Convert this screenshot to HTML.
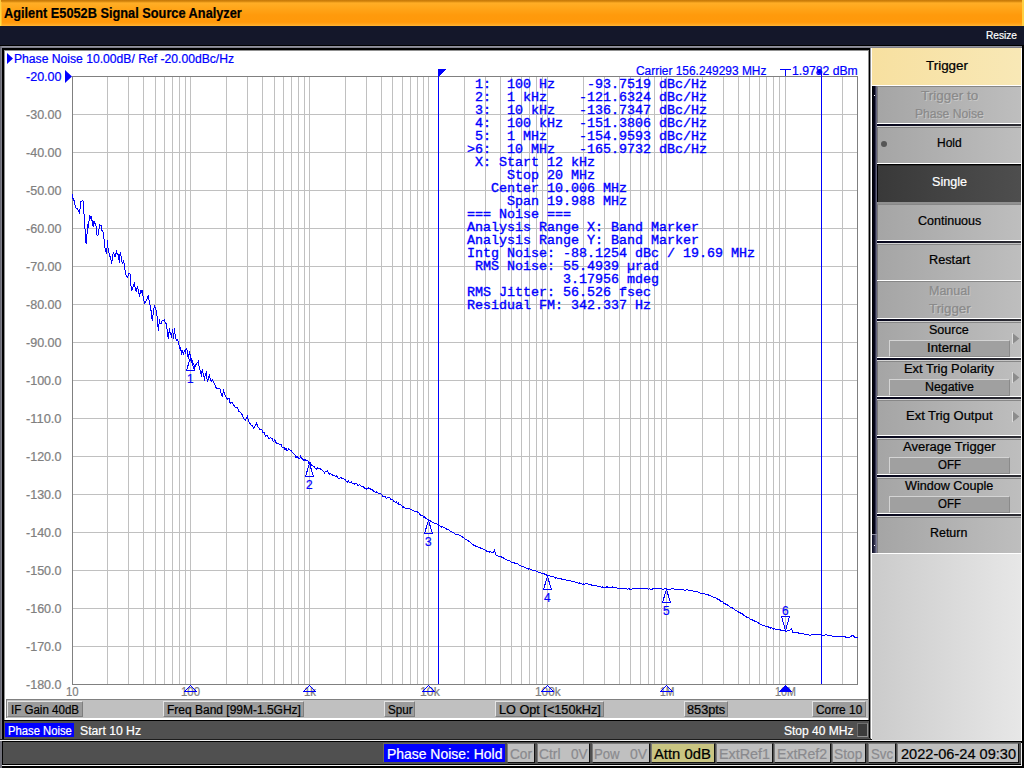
<!DOCTYPE html>
<html><head><meta charset="utf-8"><title>Agilent E5052B Signal Source Analyzer</title>
<style>
html,body{margin:0;padding:0}
body{width:1024px;height:768px;position:relative;overflow:hidden;background:#14172a;font-family:"Liberation Sans",sans-serif}
div{position:absolute;box-sizing:border-box}
.t{position:absolute;white-space:pre;transform-origin:0 0;display:block;-webkit-text-stroke:0.22px currentColor}
.m{font-family:"Liberation Mono",monospace;-webkit-text-stroke:0.38px #0000ff}
.b{font-weight:bold}
svg{position:absolute;left:0;top:0}
</style></head><body>

<div style="left:0;top:0;width:1024px;height:26px;background:linear-gradient(to bottom,#c27608 0,#d98a10 1.5px,#ffae26 3px,#ffa61a 8px,#ff9a0c 15px,#ff990a 22px,#ffa21a 24px,#ffb634 26px)"></div>
<div style="left:0;top:0;width:1px;height:26px;background:linear-gradient(to bottom,#ffc83a,#ffe048)"></div><div style="left:1px;top:2px;width:1px;height:24px;background:linear-gradient(to bottom,#ffb42c,#ffc030)"></div>
<div style="left:1022px;top:0;width:2px;height:26px;background:#ffcf40"></div>
<span class="t b" style="left:4.20px;top:4px;font-size:14px;line-height:18px;color:#000;transform:scaleX(0.9115);">Agilent E5052B Signal Source Analyzer</span>
<span class="t" style="left:986.40px;top:28px;font-size:11px;line-height:14px;color:#fff;transform:scaleX(0.9225);">Resize</span>
<div style="left:0;top:45px;width:1024px;height:1px;background:#000"></div>
<div style="left:0;top:46px;width:1024px;height:2px;background:linear-gradient(to bottom,#9c9ca8,#74747e)"></div>
<div style="left:0;top:46px;width:2px;height:722px;background:linear-gradient(to right,#5c5c68,#8c8c96)"></div>
<div style="left:2px;top:48px;width:868px;height:693px;background:#000"></div>
<div style="left:4px;top:50px;width:865px;height:670px;background:#909090"></div>
<div style="left:5px;top:51px;width:863px;height:669px;background:#fff"></div>
<div style="left:870px;top:48px;width:1px;height:693px;background:#909090"></div>
<div style="left:871px;top:48px;width:1px;height:693px;background:#fff"></div>
<svg width="1024" height="768" viewBox="0 0 1024 768" shape-rendering="crispEdges">
<path d="M107.5 76V684M128.5 76V684M143.5 76V684M155.5 76V684M164.5 76V684M172.5 76V684M179.5 76V684M185.5 76V684M190.5 76V684M226.5 76V684M247.5 76V684M262.5 76V684M274.5 76V684M283.5 76V684M291.5 76V684M298.5 76V684M304.5 76V684M309.5 76V684M345.5 76V684M366.5 76V684M381.5 76V684M392.5 76V684M402.5 76V684M410.5 76V684M417.5 76V684M423.5 76V684M428.5 76V684M464.5 76V684M485.5 76V684M500.5 76V684M511.5 76V684M521.5 76V684M529.5 76V684M536.5 76V684M542.5 76V684M547.5 76V684M583.5 76V684M604.5 76V684M619.5 76V684M630.5 76V684M640.5 76V684M648.5 76V684M654.5 76V684M661.5 76V684M666.5 76V684M702.5 76V684M723.5 76V684M738.5 76V684M749.5 76V684M759.5 76V684M766.5 76V684M773.5 76V684M779.5 76V684M785.5 76V684M821.5 76V684M842.5 76V684M72 114.5H857M72 152.5H857M72 190.5H857M72 228.5H857M72 266.5H857M72 304.5H857M72 342.5H857M72 380.5H857M72 418.5H857M72 456.5H857M72 494.5H857M72 532.5H857M72 570.5H857M72 608.5H857M72 646.5H857" stroke="#c0c0c0" stroke-width="1" fill="none"/>
<rect x="72.5" y="76.5" width="785" height="608" stroke="#808080" fill="none"/>
</svg>
<svg width="1024" height="768" viewBox="0 0 1024 768">
<polyline fill="none" stroke="#0000ff" stroke-width="1" shape-rendering="crispEdges" points="72.0,194.2 73.0,198.4 74.0,200.5 75.3,205.9 75.8,208.0 77.4,208.8 78.7,210.9 79.5,212.6 80.3,207.6 80.8,201.3 81.6,201.8 82.6,200.5 83.5,202.2 83.7,213.4 84.5,214.7 84.7,228.0 85.5,229.7 85.8,242.6 86.6,243.4 86.8,234.7 87.4,233.4 87.7,225.9 88.4,227.2 88.7,221.3 89.5,220.1 89.7,215.5 90.5,217.6 90.8,216.8 91.6,216.3 91.8,220.1 92.7,222.2 92.8,225.5 93.7,226.3 93.9,221.8 94.7,221.3 94.9,223.8 95.8,223.8 96.2,228.8 96.6,234.7 97.4,235.5 98.2,234.7 98.7,229.2 99.5,228.8 99.7,224.7 100.8,225.5 101.6,225.5 101.8,230.1 102.7,230.5 103.5,235.5 103.7,238.4 103.8,238.9 104.6,239.3 104.8,247.7 105.7,248.5 106.0,252.2 106.8,253.1 107.3,240.2 107.9,246.0 108.3,251.8 109.3,253.5 110.4,258.1 111.2,260.2 111.5,263.5 112.1,260.2 112.5,256.0 113.5,252.2 114.3,255.6 115.0,257.2 115.7,255.2 116.4,251.4 117.2,253.5 118.2,254.8 118.8,258.1 119.3,262.7 119.8,255.2 120.6,252.2 121.0,256.0 121.7,261.0 122.7,263.1 123.6,261.4 124.4,264.3 124.8,269.3 125.7,271.0 126.0,274.8 127.5,277.2 128.3,274.8 129.2,273.1 130.4,274.3 130.7,285.2 131.5,286.8 131.7,291.4 132.7,287.7 133.5,286.0 134.3,283.5 135.0,286.8 136.0,291.0 136.4,291.0 137.2,286.8 138.3,289.8 138.9,292.7 139.5,297.2 140.2,293.1 141.0,290.6 141.7,292.2 142.5,290.2 142.8,295.2 143.7,298.1 144.3,303.5 145.3,302.2 146.4,300.6 147.2,298.5 148.3,295.2 148.7,299.8 149.5,300.6 149.8,304.8 150.6,306.0 150.8,310.2 151.7,311.8 151.8,318.1 152.5,321.4 152.8,315.2 153.5,314.3 153.7,309.3 154.5,305.3 155.3,308.1 156.0,310.2 156.7,315.6 157.5,316.4 157.8,324.8 158.5,330.6 158.9,325.2 159.5,319.3 160.0,323.9 161.0,323.9 161.8,321.0 162.7,320.6 163.7,321.0 164.5,320.2 165.2,322.2 165.8,323.1 166.7,324.8 167.0,329.3 167.7,331.0 167.9,336.0 168.7,339.3 168.9,333.5 169.5,328.5 170.2,333.1 171.4,336.0 172.0,332.7 172.5,329.3 173.1,333.9 173.5,338.5 174.1,333.5 174.5,328.5 175.0,333.9 175.6,334.8 176.0,339.3 176.4,340.2 177.5,339.3 178.3,341.8 179.2,345.6 179.8,349.3 180.6,346.8 181.4,353.9 182.5,351.4 183.3,353.9 184.3,351.0 185.3,352.7 186.4,347.7 187.2,351.0 187.7,356.4 188.5,358.5 189.2,351.8 189.8,351.4 190.2,357.2 190.6,361.0 191.2,358.9 192.2,360.2 193.1,363.5 193.9,364.3 194.8,367.7 195.6,365.2 196.8,363.5 198.3,361.4 198.9,366.0 199.8,369.3 200.6,371.4 201.4,376.8 202.2,368.9 202.8,372.7 203.9,376.0 204.5,380.6 205.2,374.8 206.2,372.7 206.7,376.8 207.5,381.4 208.5,377.7 209.5,375.6 210.2,379.3 211.4,381.0 212.5,379.8 213.5,382.2 214.8,384.8 216.0,387.7 217.2,388.5 219.8,388.5 220.6,391.4 221.4,394.3 222.2,396.0 223.7,390.6 224.8,394.3 226.0,397.2 227.7,399.3 229.3,398.5 229.8,402.1 230.7,403.1 231.7,402.5 232.6,403.2 233.5,405.1 234.4,405.7 235.3,407.6 236.3,407.5 237.2,407.6 238.1,409.1 239.0,411.4 239.9,412.1 240.9,413.0 241.8,414.1 242.7,415.5 243.6,418.7 244.5,419.6 245.5,420.2 246.4,417.6 247.3,416.3 248.2,419.6 249.1,422.3 250.1,423.5 251.0,424.9 251.9,425.2 252.8,426.4 253.7,428.1 254.7,427.0 255.6,424.8 256.5,423.2 257.4,425.6 258.3,427.2 259.3,428.4 260.2,429.7 261.1,429.8 262.0,429.9 262.9,432.6 263.9,432.2 264.8,434.5 265.7,435.9 266.6,435.1 267.5,436.0 268.5,438.4 269.4,438.4 270.3,437.5 271.2,438.0 272.1,438.6 273.1,441.3 274.0,441.4 274.9,439.7 275.8,442.2 276.7,443.1 277.7,443.0 278.6,443.0 279.5,444.5 280.4,444.0 281.3,444.3 282.3,447.9 283.2,447.6 284.1,447.7 285.0,449.4 285.9,448.4 286.9,450.2 287.8,450.5 288.7,449.1 289.6,449.7 290.5,450.3 291.5,450.7 292.4,452.9 293.3,453.0 294.2,454.7 295.1,454.9 296.1,457.8 297.0,456.6 297.9,457.4 298.8,458.2 299.7,458.6 300.7,456.2 301.6,458.5 302.5,459.0 303.4,460.2 304.3,460.5 305.3,459.3 306.2,461.0 307.1,460.7 308.0,460.7 308.9,463.6 309.9,462.4 310.8,464.1 311.7,465.7 312.6,466.0 313.5,466.0 314.5,467.3 315.4,468.1 316.3,469.4 317.2,467.6 318.1,469.0 319.1,468.0 320.0,468.1 320.9,469.9 321.8,469.8 322.7,470.6 323.7,471.9 324.6,473.0 325.5,471.3 326.4,471.5 327.3,470.8 328.3,472.1 329.2,474.1 330.1,473.8 331.0,474.1 331.9,474.2 332.9,475.2 333.8,475.0 334.7,475.7 335.6,476.6 336.5,476.0 337.5,477.2 338.4,478.5 339.3,478.5 340.2,477.5 341.1,477.7 342.1,478.5 343.0,478.3 343.9,479.1 344.8,479.2 345.7,480.7 346.7,481.4 347.6,482.1 348.5,481.2 349.4,482.7 350.3,482.9 351.3,482.1 352.2,483.6 353.1,483.9 354.0,482.7 354.9,484.2 355.9,483.4 356.8,484.0 357.7,485.4 358.6,485.5 359.5,484.8 360.5,485.7 361.4,486.3 362.3,486.5 363.2,486.7 364.1,487.5 365.1,488.8 366.0,488.2 366.9,489.2 367.8,488.8 368.7,487.7 369.7,488.2 370.6,489.2 371.5,489.4 372.4,489.1 373.3,491.2 374.3,491.5 375.2,492.5 376.1,491.7 377.0,492.6 377.9,492.6 378.9,494.1 379.8,493.4 380.7,493.4 381.6,494.4 382.5,496.0 383.5,496.5 384.4,496.2 385.3,496.5 386.2,498.2 387.1,497.8 388.1,498.2 389.0,497.4 389.9,497.8 390.8,499.4 391.7,499.4 392.7,499.3 393.6,501.5 394.5,501.6 395.4,502.6 396.3,502.0 397.3,503.9 398.2,503.0 399.1,504.9 400.0,504.6 400.9,505.0 401.9,506.0 402.8,507.4 403.7,506.9 404.6,507.3 405.5,508.3 406.5,508.1 407.4,508.1 408.3,508.5 409.2,508.6 410.1,509.2 411.1,509.7 412.0,510.0 412.9,511.1 413.8,510.6 414.7,511.3 415.7,511.0 416.6,511.8 417.5,511.9 418.4,512.9 419.3,513.2 420.3,515.2 421.2,515.3 422.1,515.1 423.0,516.1 423.9,517.4 424.9,516.6 425.8,518.5 426.7,518.5 427.6,519.3 428.5,520.5 429.5,520.2 430.4,520.8 431.3,521.5 432.2,522.2 433.1,522.1 434.1,523.0 435.0,523.3 435.9,523.7 436.8,524.0 437.7,524.4 438.7,524.9 439.6,525.7 440.5,526.2 441.4,527.1 442.3,526.9 443.3,527.1 444.2,527.4 445.1,528.3 446.0,528.7 446.9,529.2 447.9,529.4 448.8,530.0 449.7,530.7 450.6,531.4 451.5,531.8 452.5,532.4 453.4,532.6 454.3,533.6 455.2,534.0 456.1,534.0 457.1,534.0 458.0,535.0 458.9,534.8 459.8,535.3 460.7,535.6 461.7,536.5 462.6,537.2 463.5,537.8 464.4,538.2 465.3,539.1 466.3,539.3 467.2,540.2 468.1,540.7 469.0,541.7 469.9,542.1 470.9,542.7 471.8,543.7 472.7,544.3 473.6,545.1 474.5,545.4 475.5,546.0 476.4,546.3 477.3,546.7 478.2,547.2 479.1,547.1 480.1,547.4 481.0,548.3 481.9,548.0 482.8,549.0 483.7,549.4 484.7,549.3 485.6,550.5 486.5,551.0 487.4,551.2 488.3,551.7 489.3,552.1 490.2,551.6 491.1,552.1 492.0,552.2 493.1,552.6 494.4,549.9 495.7,554.7 497.5,555.6 498.5,556.1 499.4,556.0 500.3,556.2 501.2,556.7 502.1,557.3 503.1,557.5 504.0,558.6 504.9,558.9 505.8,559.4 506.7,559.8 507.7,560.3 508.6,560.6 509.5,560.7 510.4,561.8 511.3,562.1 512.3,562.3 513.2,562.6 514.1,563.1 515.0,562.9 515.9,563.9 516.9,563.8 517.8,564.0 518.7,564.6 519.6,565.4 520.5,565.3 521.5,566.2 522.4,566.8 523.3,566.8 524.2,567.1 525.1,567.6 526.1,568.2 527.0,568.6 527.9,568.8 528.8,569.1 529.7,568.9 530.7,569.3 531.6,569.7 532.5,570.5 533.4,570.4 534.3,570.9 535.3,570.7 536.2,571.1 537.1,571.6 538.0,572.2 538.9,572.5 539.9,572.8 540.8,572.8 541.7,573.2 542.6,573.5 543.5,573.8 544.5,573.8 545.4,574.9 546.3,574.6 547.2,575.6 548.1,575.8 549.1,575.3 550.0,575.9 550.9,576.5 551.8,576.9 552.7,576.7 553.7,576.8 554.6,577.1 555.5,578.0 556.4,577.6 557.3,578.2 558.3,578.0 559.2,578.5 560.1,579.1 561.0,578.6 561.9,579.3 562.9,579.3 563.8,579.8 564.7,579.8 565.6,579.6 566.5,580.3 567.5,580.2 568.4,580.0 569.3,580.2 570.2,580.9 571.1,581.0 572.1,581.1 573.0,581.2 573.9,581.6 574.8,581.8 575.7,582.4 576.7,582.0 577.6,582.8 578.5,583.1 579.4,582.8 580.3,583.7 581.3,583.7 582.2,584.1 583.1,583.9 584.0,584.2 584.9,584.1 586.5,583.2 587.7,583.9 588.6,584.3 589.5,584.5 590.5,584.6 591.4,584.8 592.3,585.6 593.2,585.3 594.1,586.0 595.1,585.6 596.0,585.7 596.9,586.1 597.8,586.0 598.7,586.3 599.7,586.9 600.6,587.0 601.5,587.1 602.4,587.0 603.3,587.3 604.3,587.3 605.2,587.1 606.1,587.3 607.0,586.8 607.9,587.3 608.9,587.2 609.8,587.4 610.7,587.4 611.6,587.1 612.5,587.0 613.5,587.7 614.4,587.1 615.3,587.5 616.2,587.7 617.1,588.2 618.1,588.6 619.0,588.9 619.9,588.4 620.8,588.8 621.7,588.5 622.7,588.8 623.6,588.7 624.5,588.6 625.4,588.6 626.3,588.7 627.3,589.3 628.2,589.0 629.1,588.8 630.0,589.4 630.9,589.4 631.9,589.0 632.8,588.7 633.7,588.7 634.6,588.5 635.5,588.7 636.5,588.4 637.4,588.5 638.3,588.5 639.2,588.7 640.1,588.9 641.1,588.9 642.0,588.7 642.9,588.7 643.8,588.8 644.7,588.8 645.7,588.8 646.6,588.6 647.5,588.8 648.4,589.4 649.3,588.8 650.3,589.1 651.2,589.1 652.1,589.2 653.0,588.7 653.9,588.7 654.9,588.6 655.8,588.7 656.7,588.7 657.6,589.0 658.5,588.9 659.5,588.9 660.4,588.3 661.3,588.4 662.2,589.0 663.1,589.2 664.1,588.9 665.0,589.1 665.9,588.7 666.8,589.0 667.7,589.5 668.7,589.4 669.6,589.4 670.5,589.5 671.4,589.0 672.3,588.9 673.3,588.9 674.2,589.2 675.1,589.4 676.0,589.6 676.9,589.5 677.9,589.4 678.8,589.5 679.7,589.4 680.6,589.5 681.5,589.2 682.5,589.9 683.4,589.6 684.3,590.2 685.2,590.1 686.1,589.9 687.1,589.8 688.0,590.0 688.9,590.4 689.8,590.6 690.7,590.2 691.7,590.4 692.6,591.0 693.5,591.2 694.4,591.3 695.3,591.4 696.3,591.9 697.2,591.7 698.1,592.1 699.0,592.5 699.9,593.1 700.9,593.1 701.8,593.6 702.7,593.5 703.6,593.5 704.5,593.8 705.5,594.6 706.4,594.7 707.3,594.7 708.2,594.7 709.1,595.4 710.1,595.9 711.0,596.0 711.9,596.2 712.8,596.8 713.7,597.4 714.7,597.3 715.6,597.6 716.5,598.4 717.4,599.0 718.3,599.7 719.3,599.9 720.2,600.9 721.1,601.4 722.0,601.7 722.9,602.0 723.9,603.2 724.8,603.3 725.7,604.2 726.6,604.3 727.5,604.9 728.5,605.9 729.4,606.1 730.3,607.2 731.2,607.4 732.1,607.8 733.1,608.4 734.0,609.1 734.9,609.9 735.8,610.7 736.7,610.6 737.7,611.4 738.6,611.8 739.5,613.0 740.4,612.9 741.3,613.4 742.3,613.9 743.2,614.7 744.1,615.7 745.0,616.2 745.9,616.6 746.9,617.3 747.8,617.8 748.7,617.9 749.6,618.3 750.5,619.4 751.5,619.8 752.4,619.7 753.3,620.7 754.2,620.9 755.1,621.4 756.1,621.8 757.0,622.1 757.9,622.5 758.8,623.1 759.7,623.7 760.7,624.6 761.6,624.4 762.5,625.4 763.4,625.1 764.3,625.5 765.3,626.2 766.2,626.5 767.1,626.6 768.0,626.6 768.9,627.2 769.9,627.5 770.8,628.2 771.7,627.9 772.6,628.4 773.5,629.1 774.5,628.7 775.4,629.3 776.3,629.9 777.2,629.9 778.1,629.5 779.1,629.6 780.0,629.7 780.9,630.5 781.8,630.1 782.7,630.6 783.7,630.8 784.6,630.5 785.5,630.6 786.4,631.1 787.3,630.8 788.3,630.5 789.7,630.6 791.4,628.6 792.9,632.2 794.7,632.5 795.6,632.9 796.5,632.3 797.5,632.7 798.4,633.0 799.3,633.6 800.2,633.8 801.1,633.5 802.1,633.5 803.0,633.8 803.9,634.0 804.8,634.5 805.7,634.0 806.7,634.7 807.6,634.8 808.5,635.0 809.4,635.1 810.3,635.1 811.3,634.8 812.2,634.8 813.1,634.8 814.0,635.0 814.9,634.4 815.9,634.5 816.8,634.9 817.7,634.4 818.6,634.2 819.5,634.2 820.5,634.6 821.4,634.5 822.3,635.1 823.2,635.2 824.1,635.4 825.1,634.9 826.0,634.9 826.9,635.0 827.8,635.4 828.7,635.7 829.7,635.6 830.6,635.5 831.5,635.8 832.4,636.0 833.3,636.2 834.3,636.3 835.2,636.5 836.1,636.5 837.0,636.1 837.9,636.8 838.9,636.4 839.8,636.8 840.7,636.7 841.6,637.0 842.5,636.7 843.5,636.8 844.4,636.9 845.3,636.9 846.2,637.5 847.1,637.4 848.1,637.2 849.0,637.1 849.9,637.2 850.8,636.4 851.7,635.9 853.2,635.2 854.6,637.6 856.3,637.0 857.3,637.2 857.4,636.9"/>
<g shape-rendering="crispEdges" stroke="#0000ff" fill="none">
<path d="M438.5 69V684M821.5 72V684"/>
<path d="M438 69H446L438 77Z" fill="#0000ff" stroke="none"/>
<path d="M780 69.5H791M785.5 69V76"/>
</g>
<circle cx="819.6" cy="71.4" r="2.5" fill="#0000ff"/>
<path d="M65 70L72 76.5L65 83Z" fill="#0000ff"/>
<path d="M7 53L13 58.5L7 64Z" fill="#0000ff"/>
<g shape-rendering="crispEdges" fill="none" stroke="#0000ff" stroke-width="1">
<path d="M190.5 357.5L186.5 370.5H194.5Z"/>
<path d="M309.5 463.5L305.5 476.5H313.5Z"/>
<path d="M428.5 520.5L424.5 533.5H432.5Z"/>
<path d="M547.5 576.5L543.5 589.5H551.5Z"/>
<path d="M666.5 589.5L662.5 602.5H670.5Z"/>
<path d="M785.5 630.5L781.5 616.5H789.5Z"/>
</g>
</svg>
<span class="t" style="left:14.00px;top:51px;font-size:12px;line-height:16px;color:#0000ff;transform:scaleX(1.0118);">Phase Noise 10.00dB/ Ref -20.00dBc/Hz</span>
<span class="t" style="left:635.60px;top:63px;font-size:12px;line-height:16px;color:#0000ff;transform:scaleX(0.9924);">Carrier 156.249293 MHz</span>
<span class="t" style="left:792.00px;top:63px;font-size:12px;line-height:16px;color:#0000ff;transform:scaleX(1.0164);">1.9782 dBm</span>
<span class="t" style="left:26.00px;top:69px;font-size:12px;line-height:16px;color:#0000ff;transform:scaleX(1.0435);">-20.00</span>
<span class="t" style="left:26.00px;top:107px;font-size:12px;line-height:16px;color:#808080;transform:scaleX(1.0435);">-30.00</span>
<span class="t" style="left:26.00px;top:145px;font-size:12px;line-height:16px;color:#808080;transform:scaleX(1.0435);">-40.00</span>
<span class="t" style="left:26.00px;top:183px;font-size:12px;line-height:16px;color:#808080;transform:scaleX(1.0435);">-50.00</span>
<span class="t" style="left:26.00px;top:221px;font-size:12px;line-height:16px;color:#808080;transform:scaleX(1.0435);">-60.00</span>
<span class="t" style="left:26.00px;top:259px;font-size:12px;line-height:16px;color:#808080;transform:scaleX(1.0435);">-70.00</span>
<span class="t" style="left:26.00px;top:297px;font-size:12px;line-height:16px;color:#808080;transform:scaleX(1.0435);">-80.00</span>
<span class="t" style="left:26.00px;top:335px;font-size:12px;line-height:16px;color:#808080;transform:scaleX(1.0435);">-90.00</span>
<span class="t" style="left:26.00px;top:373px;font-size:12px;line-height:16px;color:#808080;transform:scaleX(1.0435);">-100.0</span>
<span class="t" style="left:26.00px;top:411px;font-size:12px;line-height:16px;color:#808080;transform:scaleX(1.0719);">-110.0</span>
<span class="t" style="left:26.00px;top:449px;font-size:12px;line-height:16px;color:#808080;transform:scaleX(1.0435);">-120.0</span>
<span class="t" style="left:26.00px;top:487px;font-size:12px;line-height:16px;color:#808080;transform:scaleX(1.0435);">-130.0</span>
<span class="t" style="left:26.00px;top:525px;font-size:12px;line-height:16px;color:#808080;transform:scaleX(1.0435);">-140.0</span>
<span class="t" style="left:26.00px;top:563px;font-size:12px;line-height:16px;color:#808080;transform:scaleX(1.0435);">-150.0</span>
<span class="t" style="left:26.00px;top:601px;font-size:12px;line-height:16px;color:#808080;transform:scaleX(1.0435);">-160.0</span>
<span class="t" style="left:26.00px;top:639px;font-size:12px;line-height:16px;color:#808080;transform:scaleX(1.0435);">-170.0</span>
<span class="t" style="left:26.00px;top:677px;font-size:12px;line-height:16px;color:#808080;transform:scaleX(1.0435);">-180.0</span>
<span class="t" style="left:187.20px;top:371px;font-size:12px;line-height:16px;color:#0000ff;transform:scaleX(0.9910);">1</span>
<span class="t" style="left:306.20px;top:477px;font-size:12px;line-height:16px;color:#0000ff;transform:scaleX(0.9910);">2</span>
<span class="t" style="left:425.20px;top:534px;font-size:12px;line-height:16px;color:#0000ff;transform:scaleX(0.9910);">3</span>
<span class="t" style="left:544.20px;top:590px;font-size:12px;line-height:16px;color:#0000ff;transform:scaleX(0.9910);">4</span>
<span class="t" style="left:663.20px;top:603px;font-size:12px;line-height:16px;color:#0000ff;transform:scaleX(0.9910);">5</span>
<span class="t" style="left:782.20px;top:603px;font-size:12px;line-height:16px;color:#0000ff;transform:scaleX(0.9910);">6</span>
<span class="t" style="left:65.80px;top:684px;font-size:12px;line-height:16px;color:#808080;transform:scaleX(0.9459);">10</span>
<span class="t" style="left:181.10px;top:684px;font-size:12px;line-height:16px;color:#808080;transform:scaleX(0.9481);">100</span>
<span class="t" style="left:303.75px;top:684px;font-size:12px;line-height:16px;color:#808080;transform:scaleX(0.9513);">1k</span>
<span class="t" style="left:419.70px;top:684px;font-size:12px;line-height:16px;color:#808080;transform:scaleX(1.0217);">10k</span>
<span class="t" style="left:535.00px;top:684px;font-size:12px;line-height:16px;color:#808080;transform:scaleX(0.9885);">100k</span>
<span class="t" style="left:660.30px;top:684px;font-size:12px;line-height:16px;color:#808080;transform:scaleX(0.8753);">1M</span>
<span class="t" style="left:775.00px;top:684px;font-size:12px;line-height:16px;color:#808080;transform:scaleX(0.8912);">10M</span>
<svg width="1024" height="768" shape-rendering="crispEdges"><path d="M190.5 685.5L184.5 691.5H196.5Z" fill="none" stroke="#0000ff" stroke-width="1"/><path d="M309.5 685.5L303.5 691.5H315.5Z" fill="none" stroke="#0000ff" stroke-width="1"/><path d="M428.5 685.5L422.5 691.5H434.5Z" fill="none" stroke="#0000ff" stroke-width="1"/><path d="M547.5 685.5L541.5 691.5H553.5Z" fill="none" stroke="#0000ff" stroke-width="1"/><path d="M666.5 685.5L660.5 691.5H672.5Z" fill="none" stroke="#0000ff" stroke-width="1"/><path d="M785.5 685L779 691.5V692H792V691.5Z" fill="#0000ff"/></svg>
<span class="t m" style="left:467.00px;top:76px;font-size:13.333px;line-height:17px;color:#0000ff;transform:scaleX(1.0000);"> 1:  100 Hz    -93.7519 dBc/Hz</span>
<span class="t m" style="left:467.00px;top:89px;font-size:13.333px;line-height:17px;color:#0000ff;transform:scaleX(1.0000);"> 2:  1 kHz    -121.6324 dBc/Hz</span>
<span class="t m" style="left:467.00px;top:102px;font-size:13.333px;line-height:17px;color:#0000ff;transform:scaleX(1.0000);"> 3:  10 kHz   -136.7347 dBc/Hz</span>
<span class="t m" style="left:467.00px;top:115px;font-size:13.333px;line-height:17px;color:#0000ff;transform:scaleX(1.0000);"> 4:  100 kHz  -151.3806 dBc/Hz</span>
<span class="t m" style="left:467.00px;top:128px;font-size:13.333px;line-height:17px;color:#0000ff;transform:scaleX(1.0000);"> 5:  1 MHz    -154.9593 dBc/Hz</span>
<span class="t m" style="left:467.00px;top:141px;font-size:13.333px;line-height:17px;color:#0000ff;transform:scaleX(1.0000);">&gt;6:  10 MHz   -165.9732 dBc/Hz</span>
<span class="t m" style="left:467.00px;top:154px;font-size:13.333px;line-height:17px;color:#0000ff;transform:scaleX(1.0000);"> X: Start 12 kHz</span>
<span class="t m" style="left:467.00px;top:167px;font-size:13.333px;line-height:17px;color:#0000ff;transform:scaleX(1.0000);">     Stop 20 MHz</span>
<span class="t m" style="left:467.00px;top:180px;font-size:13.333px;line-height:17px;color:#0000ff;transform:scaleX(1.0000);">   Center 10.006 MHz</span>
<span class="t m" style="left:467.00px;top:193px;font-size:13.333px;line-height:17px;color:#0000ff;transform:scaleX(1.0000);">     Span 19.988 MHz</span>
<span class="t m" style="left:467.00px;top:206px;font-size:13.333px;line-height:17px;color:#0000ff;transform:scaleX(1.0000);">=== Noise ===</span>
<span class="t m" style="left:467.00px;top:219px;font-size:13.333px;line-height:17px;color:#0000ff;transform:scaleX(1.0000);">Analysis Range X: Band Marker</span>
<span class="t m" style="left:467.00px;top:232px;font-size:13.333px;line-height:17px;color:#0000ff;transform:scaleX(1.0000);">Analysis Range Y: Band Marker</span>
<span class="t m" style="left:467.00px;top:245px;font-size:13.333px;line-height:17px;color:#0000ff;transform:scaleX(1.0000);">Intg Noise: -88.1254 dBc / 19.69 MHz</span>
<span class="t m" style="left:467.00px;top:258px;font-size:13.333px;line-height:17px;color:#0000ff;transform:scaleX(1.0000);"> RMS Noise: 55.4939 µrad</span>
<span class="t m" style="left:467.00px;top:271px;font-size:13.333px;line-height:17px;color:#0000ff;transform:scaleX(1.0000);">            3.17956 mdeg</span>
<span class="t m" style="left:467.00px;top:284px;font-size:13.333px;line-height:17px;color:#0000ff;transform:scaleX(1.0000);">RMS Jitter: 56.526 fsec</span>
<span class="t m" style="left:467.00px;top:297px;font-size:13.333px;line-height:17px;color:#0000ff;transform:scaleX(1.0000);">Residual FM: 342.337 Hz</span>
<div style="left:6px;top:699px;width:862px;height:19px;background:#c0c0c0;border-top:1px solid #808080;border-left:1px solid #808080"></div>
<div style="left:7px;top:701px;width:76px;height:16px;background:#9c9c9c;border-top:1px solid #e4e4e4;border-left:1px solid #e4e4e4;border-bottom:1px solid #7e7e7e;border-right:1px solid #7e7e7e"></div>
<span class="t" style="left:11.00px;top:702px;font-size:12px;line-height:16px;color:#000;transform:scaleX(0.9621);">IF Gain 40dB</span>
<div style="left:163px;top:701px;width:141px;height:16px;background:#9c9c9c;border-top:1px solid #e4e4e4;border-left:1px solid #e4e4e4;border-bottom:1px solid #7e7e7e;border-right:1px solid #7e7e7e"></div>
<span class="t" style="left:166.70px;top:702px;font-size:12px;line-height:16px;color:#000;transform:scaleX(0.9990);">Freq Band [99M-1.5GHz]</span>
<div style="left:384px;top:701px;width:31px;height:16px;background:#9c9c9c;border-top:1px solid #e4e4e4;border-left:1px solid #e4e4e4;border-bottom:1px solid #7e7e7e;border-right:1px solid #7e7e7e"></div>
<span class="t" style="left:387.75px;top:702px;font-size:12px;line-height:16px;color:#000;transform:scaleX(0.9676);">Spur</span>
<div style="left:495px;top:701px;width:109px;height:16px;background:#9c9c9c;border-top:1px solid #e4e4e4;border-left:1px solid #e4e4e4;border-bottom:1px solid #7e7e7e;border-right:1px solid #7e7e7e"></div>
<span class="t" style="left:499.00px;top:702px;font-size:12px;line-height:16px;color:#000;transform:scaleX(1.0559);">LO Opt [&lt;150kHz]</span>
<div style="left:684px;top:701px;width:44px;height:16px;background:#9c9c9c;border-top:1px solid #e4e4e4;border-left:1px solid #e4e4e4;border-bottom:1px solid #7e7e7e;border-right:1px solid #7e7e7e"></div>
<span class="t" style="left:687.00px;top:702px;font-size:12px;line-height:16px;color:#000;transform:scaleX(1.0607);">853pts</span>
<div style="left:812px;top:701px;width:54px;height:16px;background:#9c9c9c;border-top:1px solid #e4e4e4;border-left:1px solid #e4e4e4;border-bottom:1px solid #7e7e7e;border-right:1px solid #7e7e7e"></div>
<span class="t" style="left:815.50px;top:702px;font-size:12px;line-height:16px;color:#000;transform:scaleX(0.9908);">Corre 10</span>
<div style="left:4px;top:720px;width:865px;height:1px;background:#000"></div>
<div style="left:4px;top:721px;width:864.5px;height:17px;background:#505050"></div>
<div style="left:5px;top:723px;width:69px;height:14px;background:#0000ff"></div>
<span class="t" style="left:7.80px;top:723px;font-size:12px;line-height:16px;color:#fff;transform:scaleX(0.9377);">Phase Noise</span>
<span class="t" style="left:79.50px;top:723px;font-size:12px;line-height:16px;color:#fff;transform:scaleX(1.0167);">Start 10 Hz</span>
<span class="t" style="left:783.50px;top:723px;font-size:12px;line-height:16px;color:#fff;transform:scaleX(1.0020);">Stop 40 MHz</span>
<div style="left:857px;top:723px;width:11px;height:14px;background:#3c3c3c;border:1px solid #6e6e6e;border-right-color:#909090;border-bottom-color:#909090"></div>
<div style="left:4px;top:738px;width:867px;height:1px;background:#505050"></div>
<div style="left:0;top:739px;width:872px;height:1px;background:#1c1c1c"></div>
<div style="left:0;top:740px;width:1024px;height:1px;background:#f0f0f0"></div>
<div style="left:0;top:741px;width:1024px;height:27px;background:#000"></div>
<div style="left:3px;top:742px;width:1018px;height:22px;background:#505050"></div>
<div style="left:0;top:741px;width:1.5px;height:27px;background:#70707a"></div>
<div style="left:2px;top:765px;width:1020px;height:1px;background:#f0f0f0"></div>
<div style="left:1021px;top:743px;width:1px;height:23px;background:#f0f0f0"></div>
<div style="left:383px;top:743px;width:122px;height:19px;background:#0000ff;border-top:1px solid #6a6a5a;border-left:1px solid #6a6a5a"></div>
<span class="t" style="left:386.90px;top:745px;font-size:14.5px;line-height:18px;color:#fff;transform:scaleX(0.9608);">Phase Noise: Hold</span>
<div style="left:507px;top:743px;width:28px;height:20px;background:#c0c0c0;border-top:1px solid #7a7a7a;border-left:1px solid #7a7a7a;border-right:1px solid #101010;border-bottom:1px solid #101010"></div>
<span class="t" style="left:510.25px;top:745px;font-size:14.5px;line-height:18px;color:#8a8a8e;transform:scaleX(0.9402);">Cor</span>
<div style="left:536.5px;top:743px;width:53.5px;height:20px;background:#c0c0c0;border-top:1px solid #7a7a7a;border-left:1px solid #7a7a7a;border-right:1px solid #101010;border-bottom:1px solid #101010"></div>
<span class="t" style="left:539.00px;top:745px;font-size:14.5px;line-height:18px;color:#8a8a8e;transform:scaleX(0.9535);">Ctrl</span>
<span class="t" style="left:570.80px;top:745px;font-size:14.5px;line-height:18px;color:#8a8a8e;transform:scaleX(0.9346);">0V</span>
<div style="left:591.5px;top:743px;width:58.5px;height:20px;background:#c0c0c0;border-top:1px solid #7a7a7a;border-left:1px solid #7a7a7a;border-right:1px solid #101010;border-bottom:1px solid #101010"></div>
<span class="t" style="left:594.30px;top:745px;font-size:14.5px;line-height:18px;color:#8a8a8e;transform:scaleX(0.9089);">Pow</span>
<span class="t" style="left:630.00px;top:745px;font-size:14.5px;line-height:18px;color:#8a8a8e;transform:scaleX(0.9627);">0V</span>
<div style="left:650.75px;top:743px;width:63.75px;height:20px;background:#c9c582;border-top:1px solid #7a7a7a;border-left:1px solid #7a7a7a;border-right:1px solid #101010;border-bottom:1px solid #101010"></div>
<span class="t" style="left:654.00px;top:745px;font-size:14.5px;line-height:18px;color:#000;transform:scaleX(1.0205);">Attn 0dB</span>
<div style="left:716px;top:743px;width:57px;height:20px;background:#c0c0c0;border-top:1px solid #7a7a7a;border-left:1px solid #7a7a7a;border-right:1px solid #101010;border-bottom:1px solid #101010"></div>
<span class="t" style="left:718.50px;top:745px;font-size:14.5px;line-height:18px;color:#8a8a8e;transform:scaleX(0.9894);">ExtRef1</span>
<div style="left:773.5px;top:743px;width:57.0px;height:20px;background:#c0c0c0;border-top:1px solid #7a7a7a;border-left:1px solid #7a7a7a;border-right:1px solid #101010;border-bottom:1px solid #101010"></div>
<span class="t" style="left:776.75px;top:745px;font-size:14.5px;line-height:18px;color:#8a8a8e;transform:scaleX(0.9700);">ExtRef2</span>
<div style="left:831.75px;top:743px;width:34.25px;height:20px;background:#c0c0c0;border-top:1px solid #7a7a7a;border-left:1px solid #7a7a7a;border-right:1px solid #101010;border-bottom:1px solid #101010"></div>
<span class="t" style="left:834.25px;top:745px;font-size:14.5px;line-height:18px;color:#8a8a8e;transform:scaleX(0.9481);">Stop</span>
<div style="left:867.5px;top:743px;width:28.0px;height:20px;background:#c0c0c0;border-top:1px solid #7a7a7a;border-left:1px solid #7a7a7a;border-right:1px solid #101010;border-bottom:1px solid #101010"></div>
<span class="t" style="left:870.50px;top:745px;font-size:14.5px;line-height:18px;color:#8a8a8e;transform:scaleX(0.9113);">Svc</span>
<div style="left:896.75px;top:743px;width:122.25px;height:20px;background:#c0c0c0;border-top:1px solid #7a7a7a;border-left:1px solid #7a7a7a;border-right:1px solid #101010;border-bottom:1px solid #101010"></div>
<span class="t" style="left:900.50px;top:745px;font-size:14.5px;line-height:18px;color:#000;transform:scaleX(1.0046);">2022-06-24 09:30</span>
<div style="left:872px;top:48px;width:149px;height:692px;background:linear-gradient(to right,#cbcbcb,#e7e7e7)"></div>
<div style="left:1021px;top:48px;width:1px;height:692.5px;background:#fff"></div>
<div style="left:1022px;top:45px;width:2px;height:697px;background:#000"></div>
<div style="left:872px;top:48px;width:149px;height:37px;background:linear-gradient(to right,#f7e0a0,#f8e8b6)"></div>
<div style="left:872px;top:85px;width:149px;height:1px;background:#fff"></div>
<span class="t" style="left:926.00px;top:58px;font-size:12px;line-height:16px;color:#000;transform:scaleX(1.1182);">Trigger</span>
<div style="left:872px;top:86px;width:5px;height:468px;background:linear-gradient(to right,#000 0,#04041a 50%,#7c7c98 100%)"></div>
<div style="left:874px;top:95px;width:1px;height:1px;background:#fff"></div>
<div style="left:872px;top:535px;width:5px;height:19px;background:linear-gradient(to right,#0a0a20 0,#2a2a44 45%,#8c8ca6 100%)"></div><div style="left:872px;top:534px;width:5px;height:1px;background:#8a8a9c"></div>
<div style="left:874px;top:545px;width:1px;height:1px;background:#fff"></div>
<div style="left:877px;top:86px;width:144px;height:37px;background:linear-gradient(to right,#a5a5a5,#bebebe);border-left:1px solid #787878;border-top:1px solid #878787"></div>
<div style="left:877px;top:123px;width:144px;height:1px;background:#fff"></div>
<div style="left:877px;top:124px;width:144px;height:2px;background:linear-gradient(to right,#05051c,#2e2e34)"></div>
<div style="left:877px;top:126px;width:144px;height:1px;background:linear-gradient(to right,#d8d8d8,#c4c4c4)"></div>
<span class="t" style="left:920.50px;top:88px;font-size:12px;line-height:16px;color:#8a8a8a;transform:scaleX(1.1222);text-shadow:1px 1px 0 #c8c8c8">Trigger to</span>
<span class="t" style="left:915.10px;top:106px;font-size:12px;line-height:16px;color:#8a8a8a;transform:scaleX(1.0097);text-shadow:1px 1px 0 #c8c8c8">Phase Noise</span>
<div style="left:877px;top:127px;width:144px;height:36px;background:linear-gradient(to right,#a5a5a5,#bebebe);border-left:1px solid #787878;border-top:1px solid #878787"></div>
<div style="left:877px;top:163px;width:144px;height:1px;background:#fff"></div>
<div style="left:877px;top:164px;width:144px;height:1px;background:#000"></div>
<span class="t" style="left:936.95px;top:135px;font-size:12px;line-height:16px;color:#000;transform:scaleX(1.0016);">Hold</span>
<div style="left:880.5px;top:140.7px;width:6px;height:6px;border-radius:3px;background:#555"></div>
<div style="left:877px;top:165px;width:144px;height:37px;background:linear-gradient(to right,#393939,#4e4e4e);border-left:1px solid #000;border-top:1px solid #2a2a2a"></div>
<div style="left:877px;top:202px;width:144px;height:2px;background:#909090"></div>
<span class="t" style="left:932.30px;top:174px;font-size:12px;line-height:16px;color:#fff;transform:scaleX(1.0492);">Single</span>
<div style="left:877px;top:204px;width:144px;height:36px;background:linear-gradient(to right,#a5a5a5,#bebebe);border-left:1px solid #787878;border-top:1px solid #878787"></div>
<div style="left:877px;top:240px;width:144px;height:1px;background:#fff"></div>
<div style="left:877px;top:241px;width:144px;height:2px;background:linear-gradient(to right,#05051c,#2e2e34)"></div>
<div style="left:877px;top:243px;width:144px;height:1px;background:linear-gradient(to right,#d8d8d8,#c4c4c4)"></div>
<span class="t" style="left:917.95px;top:213px;font-size:12px;line-height:16px;color:#000;transform:scaleX(1.0425);">Continuous</span>
<div style="left:877px;top:244px;width:144px;height:36px;background:linear-gradient(to right,#a5a5a5,#bebebe);border-left:1px solid #787878;border-top:1px solid #878787"></div>
<div style="left:877px;top:280px;width:144px;height:1px;background:#fff"></div>
<span class="t" style="left:929.10px;top:252px;font-size:12px;line-height:16px;color:#000;transform:scaleX(1.0594);">Restart</span>
<div style="left:877px;top:281px;width:144px;height:37px;background:linear-gradient(to right,#a5a5a5,#bebebe);border-left:1px solid #787878;border-top:1px solid #878787"></div>
<div style="left:877px;top:318px;width:144px;height:1px;background:#fff"></div>
<div style="left:877px;top:319px;width:144px;height:2px;background:linear-gradient(to right,#05051c,#2e2e34)"></div>
<div style="left:877px;top:321px;width:144px;height:1px;background:linear-gradient(to right,#d8d8d8,#c4c4c4)"></div>
<span class="t" style="left:929.10px;top:283px;font-size:12px;line-height:16px;color:#8a8a8a;transform:scaleX(1.0417);text-shadow:1px 1px 0 #c8c8c8">Manual</span>
<span class="t" style="left:928.55px;top:301px;font-size:12px;line-height:16px;color:#8a8a8a;transform:scaleX(1.1102);text-shadow:1px 1px 0 #c8c8c8">Trigger</span>
<div style="left:877px;top:322px;width:144px;height:35px;background:linear-gradient(to right,#a5a5a5,#bebebe);border-left:1px solid #787878;border-top:1px solid #878787"></div>
<div style="left:877px;top:357px;width:144px;height:1px;background:#fff"></div>
<div style="left:877px;top:358px;width:144px;height:2px;background:linear-gradient(to right,#05051c,#2e2e34)"></div>
<div style="left:877px;top:360px;width:144px;height:1px;background:linear-gradient(to right,#d8d8d8,#c4c4c4)"></div>
<div style="left:889px;top:340px;width:121px;height:16.5px;background:#a0a0a0;border-top:1px solid #d4d4d4;border-left:1px solid #d4d4d4;border-bottom:1px solid #8a8a8a;border-right:1px solid #8a8a8a"></div>
<span class="t" style="left:929.10px;top:322px;font-size:12px;line-height:16px;color:#000;transform:scaleX(1.0463);">Source</span>
<span class="t" style="left:927.00px;top:340px;font-size:12px;line-height:16px;color:#000;transform:scaleX(1.0995);">Internal</span>
<svg width="1024" height="768"><path d="M1012.5 333.1V344.1" stroke="#dcdcdc" stroke-width="1" fill="none"/><path d="M1013 333.6L1019.3 338.6L1013 343.6Z" fill="#8c8c8c"/></svg>
<div style="left:877px;top:361px;width:144px;height:35px;background:linear-gradient(to right,#a5a5a5,#bebebe);border-left:1px solid #787878;border-top:1px solid #878787"></div>
<div style="left:877px;top:396px;width:144px;height:1px;background:#fff"></div>
<div style="left:877px;top:397px;width:144px;height:2px;background:linear-gradient(to right,#05051c,#2e2e34)"></div>
<div style="left:877px;top:399px;width:144px;height:1px;background:linear-gradient(to right,#d8d8d8,#c4c4c4)"></div>
<div style="left:889px;top:379px;width:121px;height:16.5px;background:#a0a0a0;border-top:1px solid #d4d4d4;border-left:1px solid #d4d4d4;border-bottom:1px solid #8a8a8a;border-right:1px solid #8a8a8a"></div>
<span class="t" style="left:904.10px;top:361px;font-size:12px;line-height:16px;color:#000;transform:scaleX(1.0702);">Ext Trig Polarity</span>
<span class="t" style="left:925.00px;top:379px;font-size:12px;line-height:16px;color:#000;transform:scaleX(1.0308);">Negative</span>
<svg width="1024" height="768"><path d="M1012.5 372.1V383.1" stroke="#dcdcdc" stroke-width="1" fill="none"/><path d="M1013 372.6L1019.3 377.6L1013 382.6Z" fill="#8c8c8c"/></svg>
<div style="left:877px;top:400px;width:144px;height:35px;background:linear-gradient(to right,#a5a5a5,#bebebe);border-left:1px solid #787878;border-top:1px solid #878787"></div>
<div style="left:877px;top:435px;width:144px;height:1px;background:#fff"></div>
<div style="left:877px;top:436px;width:144px;height:2px;background:linear-gradient(to right,#05051c,#2e2e34)"></div>
<div style="left:877px;top:438px;width:144px;height:1px;background:linear-gradient(to right,#d8d8d8,#c4c4c4)"></div>
<span class="t" style="left:905.70px;top:408px;font-size:12px;line-height:16px;color:#000;transform:scaleX(1.0807);">Ext Trig Output</span>
<svg width="1024" height="768"><path d="M1012.5 411.1V422.1" stroke="#dcdcdc" stroke-width="1" fill="none"/><path d="M1013 411.6L1019.3 416.6L1013 421.6Z" fill="#8c8c8c"/></svg>
<div style="left:877px;top:439px;width:144px;height:35px;background:linear-gradient(to right,#a5a5a5,#bebebe);border-left:1px solid #787878;border-top:1px solid #878787"></div>
<div style="left:877px;top:474px;width:144px;height:1px;background:#fff"></div>
<div style="left:877px;top:475px;width:144px;height:2px;background:linear-gradient(to right,#05051c,#2e2e34)"></div>
<div style="left:877px;top:477px;width:144px;height:1px;background:linear-gradient(to right,#d8d8d8,#c4c4c4)"></div>
<div style="left:889px;top:457px;width:121px;height:16.5px;background:#a0a0a0;border-top:1px solid #d4d4d4;border-left:1px solid #d4d4d4;border-bottom:1px solid #8a8a8a;border-right:1px solid #8a8a8a"></div>
<span class="t" style="left:903.10px;top:439px;font-size:12px;line-height:16px;color:#000;transform:scaleX(1.0864);">Average Trigger</span>
<span class="t" style="left:938.30px;top:457px;font-size:12px;line-height:16px;color:#000;transform:scaleX(0.9542);">OFF</span>
<div style="left:877px;top:478px;width:144px;height:35px;background:linear-gradient(to right,#a5a5a5,#bebebe);border-left:1px solid #787878;border-top:1px solid #878787"></div>
<div style="left:877px;top:513px;width:144px;height:1px;background:#fff"></div>
<div style="left:877px;top:514px;width:144px;height:2px;background:linear-gradient(to right,#05051c,#2e2e34)"></div>
<div style="left:877px;top:516px;width:144px;height:1px;background:linear-gradient(to right,#d8d8d8,#c4c4c4)"></div>
<div style="left:889px;top:496px;width:121px;height:16.5px;background:#a0a0a0;border-top:1px solid #d4d4d4;border-left:1px solid #d4d4d4;border-bottom:1px solid #8a8a8a;border-right:1px solid #8a8a8a"></div>
<span class="t" style="left:905.20px;top:478px;font-size:12px;line-height:16px;color:#000;transform:scaleX(1.0504);">Window Couple</span>
<span class="t" style="left:938.30px;top:496px;font-size:12px;line-height:16px;color:#000;transform:scaleX(0.9542);">OFF</span>
<div style="left:877px;top:517px;width:144px;height:36px;background:linear-gradient(to right,#a5a5a5,#bebebe);border-left:1px solid #787878;border-top:1px solid #878787"></div>
<div style="left:872px;top:553px;width:149px;height:1px;background:#fff"></div>
<span class="t" style="left:930.40px;top:525px;font-size:12px;line-height:16px;color:#000;transform:scaleX(1.0361);">Return</span>
</body></html>
